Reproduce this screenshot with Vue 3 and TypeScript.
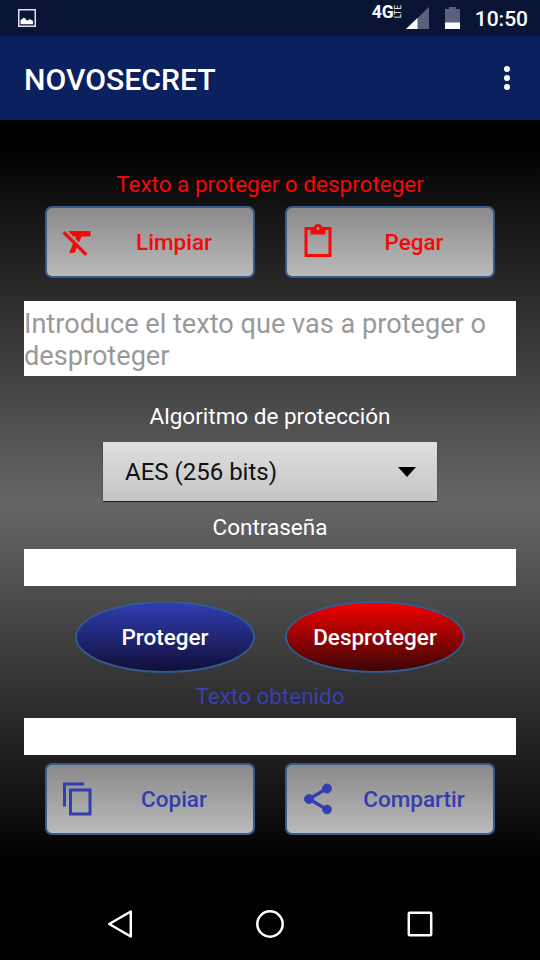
<script setup lang="ts">
import { ref } from 'vue'

const source = ref('')
const password = ref('')
const result = ref('')
const algorithm = ref('AES (256 bits)')
</script>

<template>
  <div class="screen">
    <header class="status">
      <svg class="picture" width="18" height="18" viewBox="0 0 18 18">
        <rect x=".75" y=".75" width="16.5" height="16.5" fill="none" stroke="#dfe2f2" stroke-width="1.5" />
        <path d="M2.500 15.200v-4l1.500-1.200 1.500-1.200 2 .6 1 2.200 1.500-.3 2-1.200 1.200.9 1.800.7v3.500z" fill="#fff" />
      </svg>
      <div class="status-right">
        <span class="net">4G</span><span class="lte">LTE</span>
        <svg class="signal" width="23" height="22" viewBox="0 0 23 22">
          <path d="M23 0v22H0z" fill="#59617c" />
          <path d="M11.500 11v11H0z" fill="#fff" />
        </svg>
        <svg class="battery" width="15" height="22" viewBox="0 0 15 22">
          <path d="M4 0h7v2h4v20H0V2h4z" fill="#59617c" />
          <path d="M0 15.500h15V22H0z" fill="#fff" />
        </svg>
        <span class="clock">10:50</span>
      </div>
    </header>

    <div class="toolbar">
      <h1>NOVOSECRET</h1>
      <button class="overflow" type="button"><i></i><i></i><i></i></button>
    </div>

    <main class="content">
      <p class="label red">Texto a proteger o desproteger</p>
      <div class="row">
        <button class="tile red" type="button" @click="source = ''">
          <svg class="icon bold" width="36" height="36" viewBox="0 0 24 24" fill="currentColor">
            <path d="M3.270 5L2 6.270l6.970 6.970L6.500 19h3l1.570-3.660L16.730 21 18 19.730 3.550 5.270 3.270 5zM6 5v.18L8.820 8h2.400l-.72 1.680 2.100 2.100L14.210 8H20V5H6z" />
          </svg>
          <span>Limpiar</span>
        </button>
        <button class="tile red" type="button">
          <svg class="icon" width="36" height="36" viewBox="0 0 24 24" fill="currentColor">
            <path d="M21 2h-6.180C14.400.84 13.300 0 12 0c-1.300 0-2.400.84-2.820 2H3v20h18V2zm-9 0c.55 0 1 .45 1 1s-.45 1-1 1-1-.45-1-1 .45-1 1-1zm7 18H5V4h2v3h10V4h2v16z" />
          </svg>
          <span>Pegar</span>
        </button>
      </div>

      <div class="field source">{{ source || 'Introduce el texto que vas a proteger o desproteger' }}</div>

      <p class="label algorithm-label">Algoritmo de protección</p>
      <div class="select">
        <span>{{ algorithm }}</span>
        <svg width="18" height="10" viewBox="0 0 18 10"><path d="M0 0h18L9 10z" /></svg>
      </div>

      <p class="label password-label">Contraseña</p>
      <div class="field password">{{ password }}</div>

      <div class="row ovals">
        <button class="oval blue" type="button">Proteger</button>
        <button class="oval crimson" type="button">Desproteger</button>
      </div>

      <p class="label result-label">Texto obtenido</p>
      <div class="field result">{{ result }}</div>

      <div class="row result-actions">
        <button class="tile indigo" type="button">
          <svg class="icon" width="36" height="36" viewBox="0 0 24 24" fill="currentColor">
            <path d="M16 1H2v16h2V3h12V1zm5 4H6v18h15V5zm-2 16H8V7h11v14z" />
          </svg>
          <span>Copiar</span>
        </button>
        <button class="tile indigo" type="button">
          <svg class="icon bold" width="36" height="36" viewBox="0 0 24 24" fill="currentColor">
            <path d="M18 16.080c-.76 0-1.440.3-1.960.77L8.910 12.700c.05-.23.09-.46.09-.7s-.04-.47-.09-.7l7.050-4.110c.54.5 1.250.81 2.040.81 1.660 0 3-1.340 3-3s-1.340-3-3-3-3 1.340-3 3c0 .24.040.47.090.7L8.040 9.810C7.500 9.310 6.790 9 6 9c-1.660 0-3 1.340-3 3s1.340 3 3 3c.79 0 1.500-.31 2.040-.81l7.120 4.160c-.05.21-.08.43-.08.65 0 1.610 1.310 2.920 2.920 2.920s2.920-1.310 2.920-2.920-1.310-2.920-2.920-2.920z" />
          </svg>
          <span>Compartir</span>
        </button>
      </div>
    </main>

    <nav class="navbar">
      <svg width="28" height="32" viewBox="0 0 28 32"><path d="M4.200 16L25.800 3.500v25z" /></svg>
      <svg width="32" height="32" viewBox="0 0 32 32"><circle cx="16" cy="16" r="12.700" /></svg>
      <svg width="32" height="32" viewBox="0 0 32 32"><rect x="4.800" y="4.800" width="22.400" height="22.400" rx="1" /></svg>
    </nav>
  </div>
</template>

<style>
body {
  background: #000;
}
</style>

<style scoped>
.screen {
  width: 540px;
  height: 960px;
  overflow: hidden;
  display: flex;
  flex-direction: column;
  background: #000;
  color: #fff;
  font-family: Roboto, 'Liberation Sans', sans-serif;
}
.screen * {
  box-sizing: border-box;
}
button {
  font: inherit;
  padding: 0;
  border: 0;
  background: none;
  color: inherit;
}
.status {
  flex: none;
  height: 36px;
  padding: 0 12px 0 18px;
  display: flex;
  align-items: center;
  justify-content: space-between;
  background: #0a1536;
}
.status-right {
  display: flex;
  align-items: center;
  height: 36px;
}
.net {
  font-size: 17.500px;
  font-weight: 700;
  line-height: 20px;
  margin-bottom: 12px;
}
.lte {
  writing-mode: vertical-rl;
  transform: rotate(180deg);
  width: 8px;
  font-size: 8.500px;
  line-height: 8px;
  margin-bottom: 12px;
}
.signal {
  margin-left: 4px;
}
.battery {
  margin-left: 16px;
}
.clock {
  margin-left: 15px;
  font-size: 21px;
  font-weight: 500;
  line-height: 36px;
  padding-top: 2px;
}
.toolbar {
  flex: none;
  height: 84px;
  padding: 0 28px 0 24px;
  display: flex;
  align-items: center;
  justify-content: space-between;
  background: #0b205f;
}
h1 {
  margin: 3px 0 0;
  font-size: 30.200px;
  font-weight: 500;
  line-height: 40px;
}
.overflow {
  width: 10px;
  display: flex;
  flex-direction: column;
  align-items: center;
  gap: 3px;
}
.overflow i {
  width: 6px;
  height: 6px;
  border-radius: 50%;
  background: #fff;
}
.content {
  flex: none;
  height: 744px;
  padding: 48px 24px 0;
  display: flex;
  flex-direction: column;
  background: linear-gradient(#000 24px, #666 384px, #000 744px);
}
.label {
  margin: 0;
  height: 32px;
  line-height: 32px;
  font-size: 22.500px;
  text-align: center;
  white-space: nowrap;
}
.red {
  color: #f40808;
}
.row {
  display: flex;
  justify-content: center;
  gap: 30px;
  margin-top: 6px;
}
.tile {
  width: 210px;
  height: 72px;
  padding: 0 15px 0 13px;
  display: flex;
  align-items: center;
  border: 2px solid #345d8c;
  border-radius: 7px;
  background: linear-gradient(#888, #bcbcbc) border-box;
  font-size: 22.500px;
  font-weight: 500;
}
.tile.red {
  color: #f40808;
}
.tile.indigo {
  color: #343db0;
}
.tile span {
  flex: 1;
  text-align: center;
  padding-left: 14px;
}
.icon {
  flex: none;
}
.icon.bold {
  stroke: currentColor;
  stroke-width: .6;
  stroke-linejoin: round;
}
.field {
  flex: none;
  height: 37px;
  background: #fff;
  color: #999;
}
.source {
  height: 75px;
  margin-top: 23px;
  padding-top: 7px;
  font-size: 27.150px;
  line-height: 32px;
}
.password {
  margin-top: 6px;
}
.result {
  margin-top: 6px;
}
.algorithm-label {
  margin-top: 24px;
}
.select {
  width: 334px;
  height: 59px;
  margin: 10px auto 0;
  padding: 0 21px 0 22px;
  display: flex;
  align-items: center;
  justify-content: space-between;
  background: linear-gradient(#dedede, #c5c5c5);
  box-shadow: 0 1px 1px #222;
  color: #111;
  font-size: 24px;
}
.password-label {
  margin-top: 10px;
}
.ovals {
  margin-top: 15px;
}
.oval {
  width: 180px;
  height: 72px;
  border: 2px solid #315c8b;
  border-radius: 50%;
  font-size: 22.500px;
  font-weight: 500;
}
.blue {
  background: linear-gradient(#303fb5, #100d35) border-box;
}
.crimson {
  background: linear-gradient(#f80000, #350606) border-box;
}
.result-label {
  margin-top: 7px;
  color: #3a40ae;
}
.result-actions {
  margin-top: 8px;
}
.navbar {
  flex: 1;
  padding: 24px 104px 0 105px;
  display: grid;
  grid-template-columns: 28px 32px 32px;
  align-items: center;
  justify-content: space-between;
}
.navbar svg {
  fill: none;
  stroke: #fff;
  stroke-width: 2.500;
  stroke-linejoin: round;
}
.navbar svg:nth-child(2) {
  justify-self: end;
  margin-right: -1px;
}
</style>
